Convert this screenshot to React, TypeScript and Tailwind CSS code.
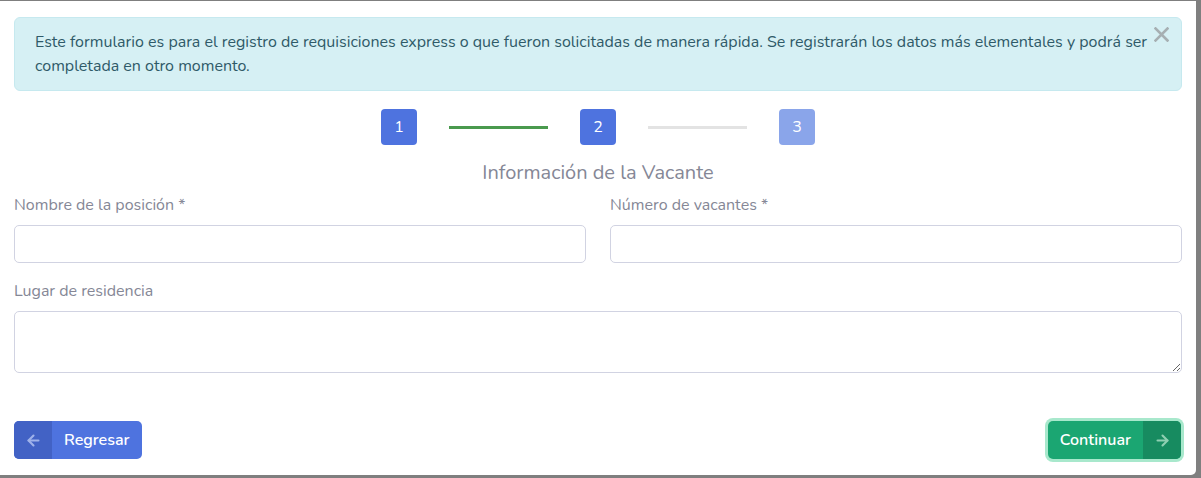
import { ArrowLeft, ArrowRight } from "lucide-react";

export default function App() {
  return (
    <div className="w-[1201px] h-[478px] bg-[#7f7f7f] pt-px overflow-hidden" style={{ fontFamily: 'Nunito, Lato, "Noto Sans", sans-serif' }}>
      <div className="w-[1196px] h-[474px] bg-white rounded-br-[5px] px-[14px] pt-4 flex flex-col">
        <div className="relative rounded-md border border-[#c6e9ef] bg-[#d6f0f4] pl-5 pr-[28px] pt-[12px] pb-[12px] text-[16px] leading-6 text-[#2f5a68]">
          Este formulario es para el registro de requisiciones express o que fueron solicitadas de manera rápida. Se registrarán los datos más elementales y podrá ser completada en otro momento.
          <svg className="absolute right-[12px] top-[9px]" width="15" height="15" viewBox="0 0 15 15">
            <path d="M1.5 1.5 L13.5 13.5 M13.5 1.5 L1.5 13.5" stroke="#a6afb2" strokeWidth="2.6" strokeLinecap="square" />
          </svg>
        </div>

        <div className="flex items-center justify-center mt-[18px] gap-8">
          <div className="w-9 h-9 rounded bg-[#4e73df] text-white text-[16px] flex items-center justify-center">1</div>
          <div className="w-[99px] h-[3px] bg-[#4a9a4e]" />
          <div className="w-9 h-9 rounded bg-[#4e73df] text-white text-[16px] flex items-center justify-center">2</div>
          <div className="w-[99px] h-[3px] bg-[#e3e3e3]" />
          <div className="w-9 h-9 rounded bg-[#8aa5ea] text-white text-[16px] flex items-center justify-center">3</div>
        </div>

        <div className="text-center text-[20px] text-[#858796] mt-[16px] leading-6">Información de la Vacante</div>

        <div className="grid grid-cols-2 gap-x-6 mt-[8px]">
          <div>
            <label className="block text-[16px] leading-6 text-[#858796] mb-[8px]">Nombre de la posición *</label>
            <input className="w-full h-[38px] rounded-[5px] border border-[#d1d3e2] outline-none" />
          </div>
          <div>
            <label className="block text-[16px] leading-6 text-[#858796] mb-[8px]">Número de vacantes *</label>
            <input className="w-full h-[38px] rounded-[5px] border border-[#d1d3e2] outline-none" />
          </div>
        </div>

        <label className="block text-[16px] leading-6 text-[#858796] mt-[16px] mb-[8px]">Lugar de residencia</label>
        <textarea className="w-full h-[62px] rounded-[5px] border border-[#d1d3e2] outline-none block" />

        <div className="flex justify-between items-center mt-[48px]">
          <button className="flex h-[38px] rounded-[5px] overflow-hidden bg-[#4e73df] text-white text-[16px] font-semibold">
            <span className="w-[38px] h-full flex items-center justify-center bg-[#4262c5] text-[#9fb2ea]">
              <ArrowLeft size={17} strokeWidth={3} />
            </span>
            <span className="pl-3 pr-[13px] flex items-center">Regresar</span>
          </button>
          <button className="flex h-[38px] rounded-[5px] overflow-hidden bg-[#1ba672] text-white text-[16px] font-semibold ring-[3px] ring-[#a8e8cc] mr-px">
            <span className="px-3 flex items-center">Continuar</span>
            <span className="w-[38px] h-full flex items-center justify-center bg-[#178b60] text-[#8fcfb2]">
              <ArrowRight size={17} strokeWidth={3} />
            </span>
          </button>
        </div>
      </div>
    </div>
  );
}
